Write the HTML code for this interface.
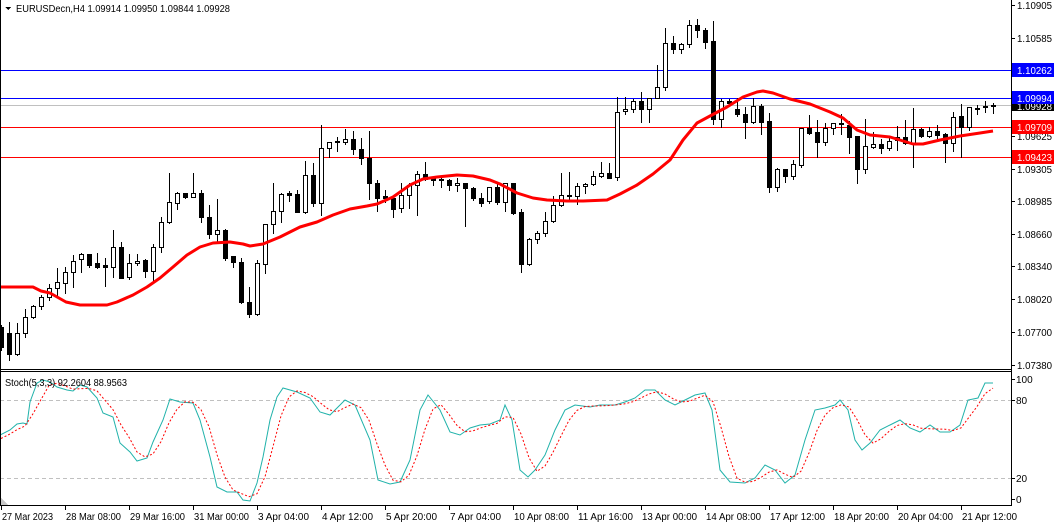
<!DOCTYPE html>
<html><head><meta charset="utf-8">
<style>
html,body{margin:0;padding:0;background:#fff;}
body{width:1058px;height:526px;overflow:hidden;position:relative;font-family:"Liberation Sans",sans-serif;}
svg{position:absolute;left:0;top:0;}
text{font-family:"Liberation Sans",sans-serif;font-size:10px;}
</style></head><body>
<svg id="s" width="1058" height="526" xmlns="http://www.w3.org/2000/svg" shape-rendering="crispEdges">
<rect width="1058" height="526" fill="#fff"/>
<line x1="0" y1="70.5" x2="1011" y2="70.5" stroke="#0000ff"/>
<line x1="0" y1="98.5" x2="1011" y2="98.5" stroke="#0000ff"/>
<line x1="0" y1="105.5" x2="1011" y2="105.5" stroke="#c0c0c0"/>
<line x1="0" y1="127.5" x2="1011" y2="127.5" stroke="#ff0000"/>
<line x1="0" y1="157.5" x2="1011" y2="157.5" stroke="#ff0000"/>
<g id="candles"></g>
<polyline id="ma" fill="none" stroke="#ff0000" stroke-width="3" shape-rendering="auto" stroke-linejoin="round"/>
<line x1="0" y1="400.5" x2="1011" y2="400.5" stroke="#c0c0c0" stroke-dasharray="4,3"/>
<line x1="0" y1="478.5" x2="1011" y2="478.5" stroke="#c0c0c0" stroke-dasharray="4,3"/>
<polyline id="k" fill="none" stroke="#20b2aa" stroke-width="1" shape-rendering="auto"/>
<polyline id="d" fill="none" stroke="#ff0000" stroke-width="1" stroke-dasharray="2,2" shape-rendering="auto"/>
<line x1="0.5" y1="0" x2="0.5" y2="505" stroke="#000"/>
<line x1="1011.5" y1="0" x2="1011.5" y2="505" stroke="#000"/>
<line x1="0" y1="369.5" x2="1012" y2="369.5" stroke="#000"/>
<line x1="0" y1="371.5" x2="1012" y2="371.5" stroke="#000"/>
<line x1="0" y1="505.5" x2="1012" y2="505.5" stroke="#000"/>
<polygon points="1,498 1,505 8,505" fill="#c8c8c8"/>
<polygon points="5,7 11,7 8,10" fill="#000"/>
<text x="16" y="12" textLength="214" lengthAdjust="spacingAndGlyphs">EURUSDecn,H4  1.09914 1.09950 1.09844 1.09928</text>
<text x="5" y="386" textLength="122" lengthAdjust="spacingAndGlyphs">Stoch(5,3,3) 92.2604 88.9563</text>
<g id="axis"></g>
<rect x="1012" y="63" width="42" height="14" fill="#0000ff"/>
<text x="1017" y="74" fill="#fff" textLength="35" lengthAdjust="spacingAndGlyphs">1.10262</text>
<rect x="1012" y="102" width="42" height="9" fill="#000"/>
<text x="1017" y="110" fill="#fff" textLength="35" lengthAdjust="spacingAndGlyphs">1.09928</text>
<rect x="1012" y="91" width="42" height="13" fill="#0000ff"/>
<text x="1017" y="102" fill="#fff" textLength="35" lengthAdjust="spacingAndGlyphs">1.09994</text>
<rect x="1012" y="120" width="42" height="14" fill="#ff0000"/>
<text x="1017" y="131" fill="#fff" textLength="35" lengthAdjust="spacingAndGlyphs">1.09709</text>
<rect x="1012" y="150" width="42" height="14" fill="#ff0000"/>
<text x="1017" y="161" fill="#fff" textLength="35" lengthAdjust="spacingAndGlyphs">1.09423</text>
</svg>
<script>
var NS="http://www.w3.org/2000/svg";
function el(n,a,p){var e=document.createElementNS(NS,n);for(var k in a)e.setAttribute(k,a[k]);(p||document.getElementById('s')).appendChild(e);return e;}
var C=[[327,347,325,350,0],[333,354,322,360,0],[333,354,323,355,1],[317,333,309,337,1],[306,317,305,318,1],[297,306,295,309,1],[288,297,284,300,1],[282,288,268,295,1],[272,283,267,293,1],[261,272,255,287,1],[254,259,253,272,1],[254,265,254,267,0],[263,267,253,268,0],[265,267,258,286,0],[247,267,230,277,1],[247,278,242,278,0],[263,277,254,279,1],[261,263,254,265,1],[260,271,259,277,0],[247,271,244,280,1],[222,247,217,252,1],[202,222,173,223,1],[193,203,192,209,1],[193,197,193,198,0],[193,197,173,197,1],[193,217,190,222,0],[217,234,205,238,0],[230,234,199,242,1],[230,258,229,260,0],[256,262,256,267,0],[262,302,258,303,0],[302,314,287,317,0],[263,314,260,315,1],[224,264,224,273,1],[211,224,183,233,1],[194,211,193,222,1],[193,195,191,201,0],[194,212,190,212,0],[175,212,161,213,1],[175,203,163,206,0],[148,203,125,215,1],[142,148,142,157,1],[141,142,137,151,0],[139,142,129,144,1],[139,149,131,154,0],[149,158,138,164,0],[158,183,131,199,0],[183,198,180,211,0],[196,198,190,202,0],[198,209,197,217,0],[195,208,183,212,1],[185,195,183,208,1],[174,185,171,215,1],[174,179,162,180,0],[178,180,177,185,0],[179,180,177,187,0],[180,185,179,190,0],[183,185,178,191,1],[183,188,183,226,0],[188,198,187,200,0],[198,203,193,206,0],[187,201,187,203,1],[187,202,183,204,0],[183,202,183,211,1],[183,213,183,214,0],[212,264,209,272,0],[239,264,238,265,1],[233,239,231,243,1],[221,233,212,236,1],[205,221,196,222,1],[195,205,173,206,1],[195,196,172,200,0],[186,196,183,204,1],[184,186,183,193,1],[176,184,171,185,1],[173,176,162,177,1],[173,178,163,178,0],[112,177,97,180,1],[109,111,97,114,1],[101,109,99,112,1],[101,109,92,122,0],[98,109,98,122,1],[87,98,65,98,1],[43,87,28,90,1],[43,49,36,53,0],[44,49,43,53,1],[25,44,20,47,1],[25,30,19,37,0],[30,42,28,48,0],[41,119,21,124,0],[101,119,99,127,1],[101,103,99,106,0],[109,114,98,116,0],[114,122,107,138,0],[106,122,98,123,1],[106,122,104,134,0],[121,187,113,192,0],[169,187,168,191,1],[169,176,169,182,0],[164,176,160,179,1],[128,165,128,167,1],[128,133,115,134,0],[132,142,120,157,0],[128,142,123,145,1],[123,128,123,134,1],[123,124,114,134,1],[125,137,121,153,0],[136,169,136,183,0],[146,169,119,173,1],[144,147,132,148,1],[144,148,139,153,0],[141,148,137,150,1],[137,140,126,150,1],[137,143,120,144,0],[129,143,108,167,1],[129,136,128,137,0],[131,136,127,137,1],[131,135,125,138,0],[134,143,133,162,0],[117,143,112,151,1],[116,127,104,157,0],[107,127,107,130,1],[108,109,105,114,1],[106,107,101,112,0],[105,106,103,113,1]];
var g=document.getElementById('candles');
C.forEach(function(c,k){var cx=1+8*k;
 el('line',{x1:cx+0.5,y1:c[2],x2:cx+0.5,y2:c[3]+1,stroke:'#000'},g);
 var h=c[1]-c[0];
 if(h<=1){el('rect',{x:cx-2,y:c[0],width:5,height:2,fill:'#000'},g);}
 else if(c[4]){el('rect',{x:cx-1.5,y:c[0]+0.5,width:4,height:h,fill:'#fff',stroke:'#000'},g);}
 else{el('rect',{x:cx-2,y:c[0],width:5,height:h+1,fill:'#000'},g);}
});
var MA=[[0,287],[33,287],[41,291],[50,293],[66,302],[80,305],[107,305],[117,302],[133,295],[147,287],[160,278],[173,267],[187,255],[200,247],[213,243],[230,242],[243,244],[250,246],[263,244],[280,237],[300,227],[317,222],[333,215],[350,209],[367,206],[377,204],[393,197],[410,185],[423,179],[437,177],[457,175],[473,176],[490,180],[500,184],[517,193],[533,198],[547,200],[567,201],[583,201],[607,200],[620,194],[637,185],[653,174],[670,160],[683,140],[697,123],[710,116],[727,107],[743,97],[757,92],[763,91],[773,93],[790,99],[810,104],[830,112],[843,118],[857,130],[870,135],[890,137],[913,144],[923,144],[940,140],[960,136],[980,133],[993,131]];
document.getElementById('ma').setAttribute('points',MA.map(function(p){return p.join(',')}).join(' '));
var K=[[0,435],[10,430],[17,424],[23,423],[27,424],[30,402],[37,383],[43,380],[50,382],[57,387],[67,390],[73,391],[80,385],[87,387],[97,398],[103,413],[113,417],[120,443],[130,452],[137,461],[147,458],[153,442],[163,420],[170,399],[180,402],[193,403],[200,420],[210,457],[217,487],[227,492],[237,492],[243,500],[250,501],[257,483],[263,457],[270,420],[277,397],[283,388],[297,392],[310,398],[320,412],[330,415],[345,400],[355,405],[370,440],[378,480],[390,484],[400,482],[410,460],[420,410],[428,395],[440,410],[450,432],[460,435],[470,428],[480,425],[490,424],[500,420],[505,405],[512,420],[520,470],[528,477],[535,470],[545,455],[555,430],[565,410],[575,405],[590,407],[600,405],[615,405],[625,402],[635,398],[645,390],[655,390],[665,400],[675,405],[685,400],[695,395],[705,393],[712,410],[720,470],[730,482],[745,483],[755,478],[765,465],[775,470],[785,483],[795,475],[805,440],[815,410],[825,408],[835,405],[840,400],[848,410],[855,440],[862,450],[870,443],[880,430],[890,425],[900,420],[910,428],[920,432],[930,425],[940,432],[950,432],[960,425],[968,400],[978,398],[985,383],[993,383]];
function interp(x){for(var i=1;i<K.length;i++){if(K[i][0]>=x){var a=K[i-1],b=K[i];var t=(x-a[0])/((b[0]-a[0])||1);return a[1]+t*(b[1]-a[1]);}}return K[K.length-1][1];}
document.getElementById('k').setAttribute('points',K.map(function(p){return p.join(',')}).join(' '));
var D=[];for(var k=0;k<125;k++){var x=1+8*k;var v=(interp(x)+interp(x-8)+interp(x-16))/3;D.push(x+','+v.toFixed(1));}
document.getElementById('d').setAttribute('points',D.join(' '));
var ax=document.getElementById('axis');
[["1.10905",5],["1.10585",38],["1.09625",136],["1.09305",169],["1.08985",201],["1.08660",234],["1.08340",266],["1.08020",299],["1.07700",332],["1.07380",365]].forEach(function(l){
 el('line',{x1:1012,y1:l[1]+0.5,x2:1015,y2:l[1]+0.5,stroke:'#000'},ax);
 el('text',{x:1017,y:l[1]+4,textLength:35,lengthAdjust:'spacingAndGlyphs'},ax).textContent=l[0];});
[["100",379],["80",400],["20",478],["0",499]].forEach(function(l){
 el('line',{x1:1012,y1:l[1]+0.5,x2:1015,y2:l[1]+0.5,stroke:'#000'},ax);
 el('text',{x:1016,y:l[1]+4},ax).textContent=l[0];});
var T=["27 Mar 2023","28 Mar 08:00","29 Mar 16:00","31 Mar 00:00","3 Apr 04:00","4 Apr 12:00","5 Apr 20:00","7 Apr 04:00","10 Apr 08:00","11 Apr 16:00","13 Apr 00:00","14 Apr 08:00","17 Apr 12:00","18 Apr 20:00","20 Apr 04:00","21 Apr 12:00"];
T.forEach(function(t,i){var x=1+64*i;
 el('line',{x1:x+0.5,y1:506,x2:x+0.5,y2:510,stroke:'#000'},ax);
 var w=Math.round(t.length*4.6);
 el('text',{x:x+1,y:520,textLength:w,lengthAdjust:'spacingAndGlyphs'},ax).textContent=t;});
</script>
</body></html>
